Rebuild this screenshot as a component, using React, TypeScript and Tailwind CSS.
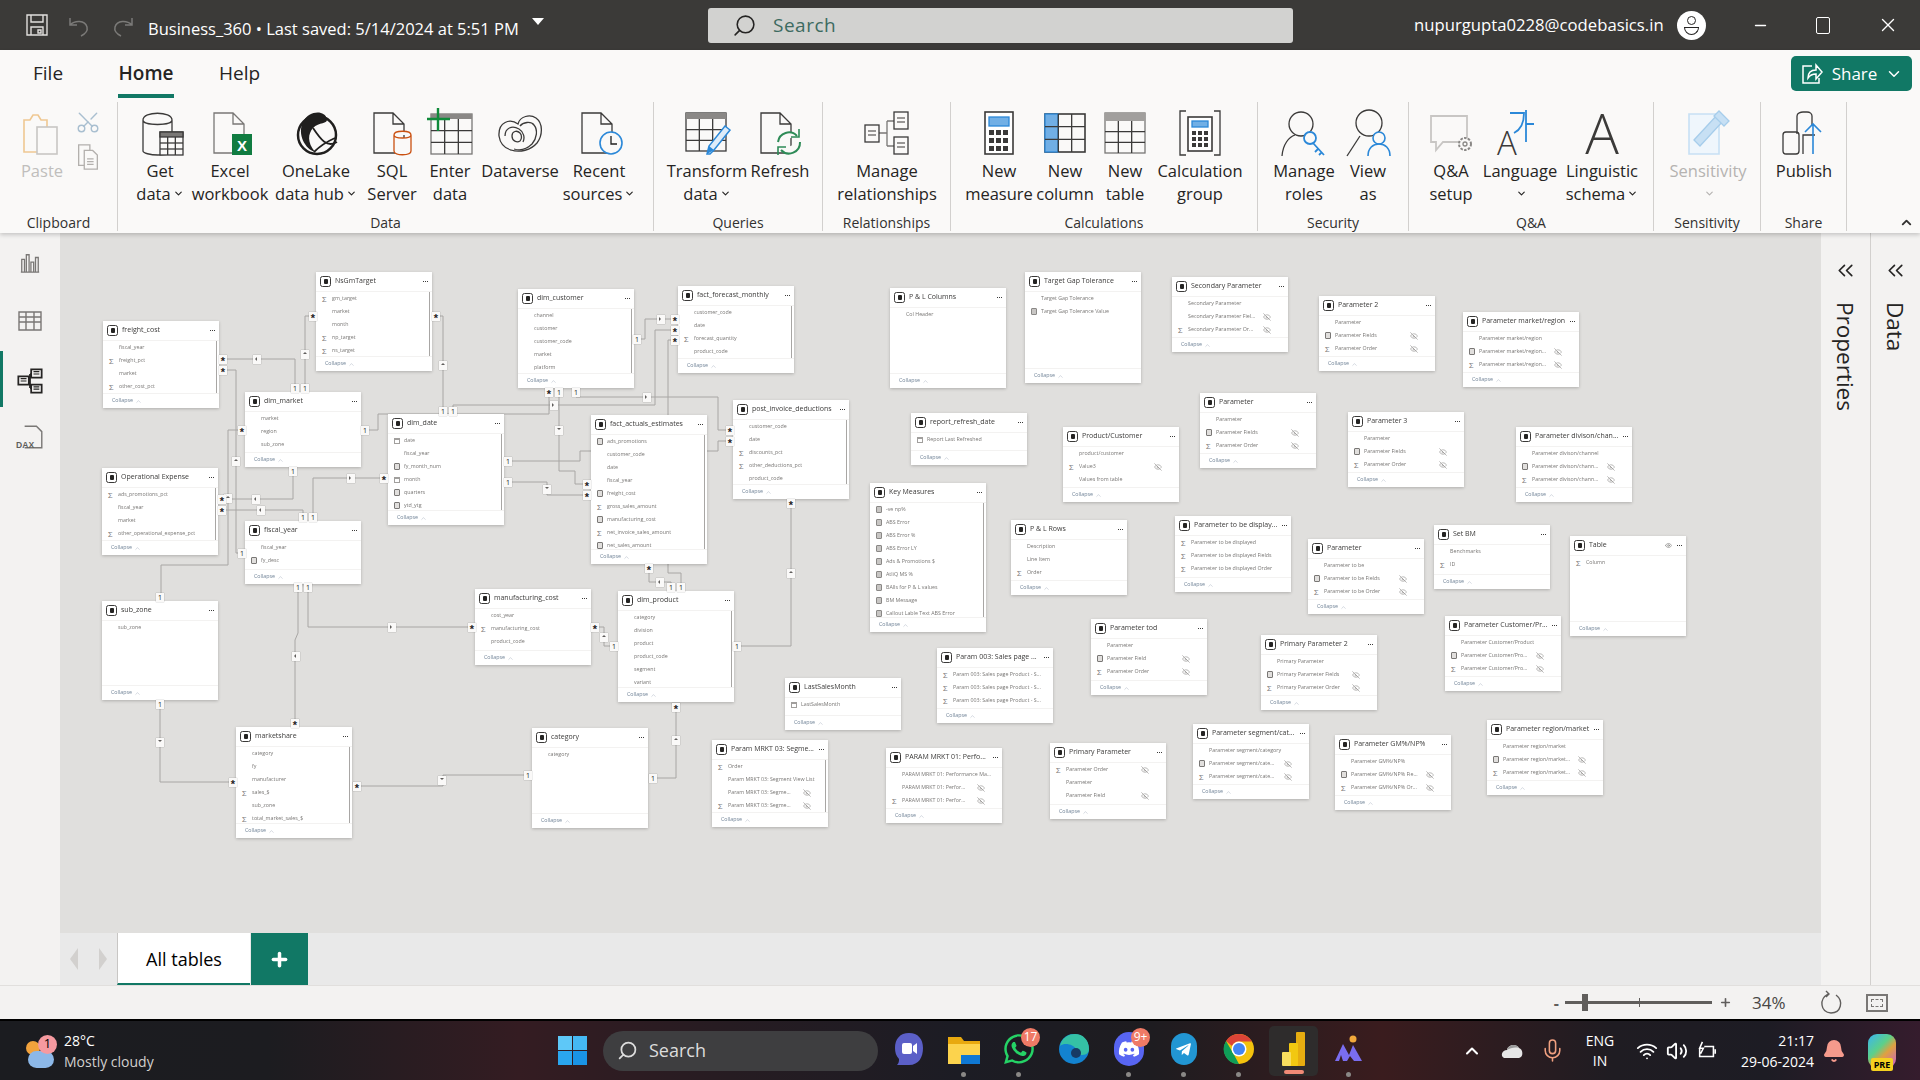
import { ChevronDown, ChevronUp, ChevronsLeft, Scissors, EyeOff, Eye, Plus, Minus, X, Wifi, Volume2, Mic, Bell, Search } from 'lucide-react'
import { FaWhatsapp, FaDiscord, FaTelegramPlane } from 'react-icons/fa'
import type { ReactNode } from 'react'

const dark = '#3b3a39'
const blue = '#2b88d8'

function Ico({ children, className = 'h-12 w-12 overflow-visible' }: { children: ReactNode; className?: string }) {
  return <svg viewBox="0 0 48 48" className={className} fill="none" stroke={dark} strokeWidth="1.3">{children}</svg>
}

const doc = (x: number) => `M${x} 5h19l11 11v29h-30zM${x + 19} 5v11h11`

const gridLines = (x: number, y: number, w: number, h: number, cols: number, rows: number) => {
  const out = []
  for (let i = 1; i < cols; i++) out.push(<path key={'c' + i} d={`M${x + (w / cols) * i} ${y}v${h}`} />)
  for (let i = 1; i < rows; i++) out.push(<path key={'r' + i} d={`M${x} ${y + (h / rows) * i}h${w}`} />)
  return out
}

const icons: Record<string, ReactNode> = {
  paste: (
    <Ico>
      <path d="M6 12h6l3-5h5l3 5h6v32H6z" stroke="#efc892" strokeWidth="1.6" />
      <rect x="19" y="19" width="20" height="27" fill="#faf9f8" stroke="#c8c6c4" strokeWidth="1.6" />
    </Ico>
  ),
  getdata: (
    <Ico>
      <path d="M7 12c0-9 29-9 29 0v31c0 3-8 4-14 4-8 0-15-2-15-4zM7 12c0 6 29 6 29 0" />
      <rect x="24" y="24" width="23" height="23" fill="#faf9f8" stroke="#3b3a39" />
      <rect x="24" y="24" width="23" height="5" fill="#797775" />
      {gridLines(24, 29, 23, 18, 3, 3)}
    </Ico>
  ),
  excel: (
    <Ico>
      <path d={doc(8)} stroke="#797775" />
      <rect x="26" y="26" width="20" height="21" fill="#107c41" stroke="none" />
      <text x="36" y="43" textAnchor="middle" fill="#fff" stroke="none" fontSize="15" fontWeight="700" fontFamily="Liberation Sans">X</text>
    </Ico>
  ),
  onelake: (
    <Ico>
      <circle cx="25" cy="27" r="19" stroke="#201f1e" strokeWidth="2.5" />
      <path d="M11 14c6-12 22-12 24-3 1 5-8 3-14 9-5 6-6 14 2 24-10-3-18-18-12-30z" fill="#201f1e" stroke="none" />
      <path d="M21 20c8 12 14 20 24 14M22 44c6-6 12-10 21-14" stroke="#201f1e" strokeWidth="1.8" />
    </Ico>
  ),
  sql: (
    <Ico>
      <path d={doc(6)} />
      <path d="M26 27c0-5 17-5 17 0v16c0 5-17 5-17 0zM26 27c0 4 17 4 17 0" fill="#faf9f8" stroke="#ca5010" />
    </Ico>
  ),
  enter: (
    <Ico>
      <rect x="5" y="6" width="41" height="40" stroke="#797775" />
      <rect x="5" y="6" width="41" height="5" fill="#8a8886" stroke="none" />
      {gridLines(5, 11, 41, 35, 3, 3)}
      <path d="M12 0v23M1 11h23" stroke="#0f8a3a" strokeWidth="2.4" />
    </Ico>
  ),
  dataverse: (
    <Ico>
      <path d="M3 28C2 14 14 10 22 16c2-8 12-10 18-6 7 5 7 17 1 25-6 7-17 10-26 7C8 40 4 35 3 28z" />
      <path d="M9 28c0-8 7-11 14-7 5 3 6 9 4 13" />
      <path d="M24 18c3-4 11-5 14-1 4 5 3 13-2 19-5 5-12 7-18 5" />
      <path d="M16 28c0-5 5-6 8-3 2 2 2 6 0 8-3 2-8 0-8-5z" />
    </Ico>
  ),
  recent: (
    <Ico>
      <path d={doc(7)} />
      <circle cx="36" cy="35" r="11" fill="#faf9f8" stroke={blue} strokeWidth="1.6" />
      <path d="M36 28v8h6" stroke="#201f1e" />
    </Ico>
  ),
  transform: (
    <Ico>
      <rect x="3" y="5" width="40" height="38" />
      <rect x="3" y="5" width="40" height="6" fill="#8a8886" stroke="none" />
      {gridLines(3, 11, 40, 32, 3, 3)}
      <path d="M27 46l-3 0 2-8 16-20 5 4-16 20z" fill="#deecf9" stroke={blue} strokeWidth="1.5" />
      <path d="M24 46l2-8 5 4z" fill={blue} stroke="none" />
    </Ico>
  ),
  refresh: (
    <Ico>
      <path d={doc(5)} />
      <path d="M22 34a11 11 0 0 1 19-6M44 34a11 11 0 0 1-19 8" fill="#faf9f8" stroke="#2e8b57" strokeWidth="2" />
      <path d="M43 21v8h-8M22 47v-8h8" stroke="#2e8b57" strokeWidth="1.6" />
    </Ico>
  ),
  relationships: (
    <Ico>
      <path d="M14 25h10M24 13v25M24 13h8M24 38h8" stroke="#797775" />
      <rect x="31" y="4" width="14" height="17" fill="#faf9f8" />
      <rect x="31" y="29" width="14" height="17" fill="#faf9f8" />
      <rect x="2" y="17" width="14" height="17" fill="#faf9f8" />
      <path d="M34 10h8M34 14h8M34 35h8M34 39h8M5 23h8M5 27h8" stroke="#797775" />
    </Ico>
  ),
  measure: (
    <Ico>
      <rect x="10" y="4" width="28" height="42" fill="#fff" strokeWidth="1.6" />
      <rect x="14" y="9" width="20" height="9" fill="#71afe5" stroke={blue} />
      {[22, 30, 38].map(y => [14, 21, 28].map(x => <rect key={x + '-' + y} x={x} y={y} width="5" height="5" fill="#3b3a39" stroke="none" />))}
    </Ico>
  ),
  column: (
    <Ico>
      <rect x="4" y="6" width="40" height="38" strokeWidth="1.6" />
      <rect x="4" y="6" width="13" height="38" fill="#71afe5" stroke={blue} />
      {gridLines(4, 6, 40, 38, 3, 3)}
    </Ico>
  ),
  table: (
    <Ico>
      <rect x="4" y="5" width="40" height="40" stroke="#797775" />
      <rect x="4" y="5" width="40" height="8" fill="#a19f9d" stroke="none" />
      {gridLines(4, 13, 40, 32, 3, 3)}
    </Ico>
  ),
  calcgroup: (
    <Ico>
      <path d="M10 3H4v44h6M38 3h6v44h-6" />
      <rect x="12" y="9" width="24" height="34" fill="#fff" strokeWidth="1.6" />
      <rect x="16" y="13" width="16" height="6" fill="#71afe5" stroke={blue} />
      {[23, 29, 35].map(y => [16, 22, 28].map(x => <rect key={x + '-' + y} x={x} y={y} width="4" height="4" fill="#3b3a39" stroke="none" />))}
    </Ico>
  ),
  roles: (
    <Ico>
      <circle cx="21" cy="16" r="12" />
      <path d="M2 48c1-12 7-19 13-21" />
      <circle cx="30" cy="30" r="6" fill="#faf9f8" stroke={blue} strokeWidth="1.8" />
      <path d="M33 35l11 12M38 41l-3 3M42 44l-3 3" stroke={blue} strokeWidth="1.8" />
    </Ico>
  ),
  viewas: (
    <Ico>
      <circle cx="25" cy="15" r="13" />
      <path d="M3 48l13-20" />
      <circle cx="35" cy="30" r="6" fill="#faf9f8" stroke={blue} strokeWidth="1.6" />
      <path d="M24 48c0-8 5-12 11-12s11 4 11 12" stroke={blue} strokeWidth="1.6" />
    </Ico>
  ),
  qa: (
    <Ico>
      <path d="M4 8h36v26H16l-7 8v-8H4z" stroke="#c8c6c4" strokeWidth="1.8" />
      <circle cx="38" cy="36" r="6" fill="#faf9f8" stroke="#8a8886" strokeWidth="2" strokeDasharray="2.5 1.3" />
      <circle cx="38" cy="36" r="2" stroke="#8a8886" />
    </Ico>
  ),
  language: (
    <Ico>
      <text x="11" y="47" textAnchor="middle" fontSize="33" fontWeight="300" fill="#3b3a39" stroke="none" fontFamily="Open Sans">A</text>
      <path d="M14 5h14c0 10-4 17-10 20M30 2v32M30 16h8" stroke={blue} strokeWidth="1.8" />
    </Ico>
  ),
  linguistic: (
    <Ico>
      <text x="24" y="46" textAnchor="middle" fontSize="56" fontWeight="300" fill="#3b3a39" stroke="none" fontFamily="Open Sans">A</text>
    </Ico>
  ),
  sensitivity: (
    <Ico>
      <path d="M5 6h30v40H5z" fill="#eff6fc" stroke="#c7e0f4" strokeWidth="1.6" />
      <path d="M10 32L34 6l6 6-24 26z" fill="#c7e0f4" stroke="#a6cdeb" />
      <path d="M30 8l5-5 10 10-5 5z" fill="#c7e0f4" stroke="#a6cdeb" />
    </Ico>
  ),
  publish: (
    <Ico>
      <path d="M17 26V8c0-3 4-4 6-4h4c3 0 5 2 5 4v10" />
      <rect x="3" y="24" width="16" height="22" rx="3" />
      <path d="M23 46V27h12" />
      <path d="M33 46V16M25 24l8-8 8 8" stroke={blue} strokeWidth="1.6" />
    </Ico>
  ),
}

type Btn = { w: number; icon?: string; lines: string[]; chev?: boolean; faded?: boolean }
type Group = { label: string; w: number; pl: number; buttons: Btn[] }

const groups: Group[] = [
  { label: 'Data', w: 536, pl: 7, buttons: [
    { w: 70, icon: 'getdata', lines: ['Get', 'data'], chev: true },
    { w: 70, icon: 'excel', lines: ['Excel', 'workbook'] },
    { w: 102, icon: 'onelake', lines: ['OneLake', 'data hub'], chev: true },
    { w: 50, icon: 'sql', lines: ['SQL', 'Server'] },
    { w: 66, icon: 'enter', lines: ['Enter', 'data'] },
    { w: 74, icon: 'dataverse', lines: ['Dataverse'] },
    { w: 84, icon: 'recent', lines: ['Recent', 'sources'], chev: true },
  ] },
  { label: 'Queries', w: 169, pl: 6, buttons: [
    { w: 94, icon: 'transform', lines: ['Transform', 'data'], chev: true },
    { w: 52, icon: 'refresh', lines: ['Refresh'] },
  ] },
  { label: 'Relationships', w: 128, pl: 9, buttons: [{ w: 110, icon: 'relationships', lines: ['Manage', 'relationships'] }] },
  { label: 'Calculations', w: 307, pl: 9, buttons: [
    { w: 78, icon: 'measure', lines: ['New', 'measure'] },
    { w: 54, icon: 'column', lines: ['New', 'column'] },
    { w: 66, icon: 'table', lines: ['New', 'table'] },
    { w: 84, icon: 'calcgroup', lines: ['Calculation', 'group'] },
  ] },
  { label: 'Security', w: 151, pl: 14, buttons: [
    { w: 64, icon: 'roles', lines: ['Manage', 'roles'] },
    { w: 64, icon: 'viewas', lines: ['View', 'as'] },
  ] },
  { label: 'Q&A', w: 245, pl: 12, buttons: [
    { w: 60, icon: 'qa', lines: ['Q&A', 'setup'] },
    { w: 78, icon: 'language', lines: ['Language', ''], chev: true },
    { w: 86, icon: 'linguistic', lines: ['Linguistic', 'schema'], chev: true },
  ] },
  { label: 'Sensitivity', w: 107, pl: 8, buttons: [{ w: 92, icon: 'sensitivity', lines: ['Sensitivity', ''], chev: true, faded: true }] },
  { label: 'Share', w: 86, pl: 11, buttons: [{ w: 64, icon: 'publish', lines: ['Publish'] }] },
]

function RibbonButton({ b }: { b: Btn }) {
  return (
    <div className={`flex flex-col items-center ${b.faded ? 'text-[#b5b3b1]' : 'text-[#252423]'}`} style={{ width: b.w }}>
      <div className="mt-[6px] flex h-[48px] items-center justify-center">{b.icon && icons[b.icon]}</div>
      <div className="mt-[3px] text-center text-[16.5px] leading-[23px] whitespace-nowrap">
        {b.lines.map((l, i) => (
          <div key={i} className="flex h-[23px] items-center justify-center">
            {l}
            {b.chev && i === b.lines.length - 1 && <ChevronDown size={11} strokeWidth={2.5} className="ml-[2px]" />}
          </div>
        ))}
      </div>
    </div>
  )
}

function Ribbon() {
  return (
    <div className="relative z-10 flex h-[183px] flex-col bg-[#faf9f8] shadow-[0_2px_4px_rgba(0,0,0,0.18)]">
      <div className="relative flex h-[52px] items-start text-[19px] text-[#252423]">
        <div className="ml-[33px] mt-[9px] w-[85px]">File</div>
        <div className="relative mt-[9px] w-[56px] text-center font-semibold">
          Home
          <div className="absolute -bottom-[10px] left-0 h-[4px] w-[56px] bg-[#117865]" />
        </div>
        <div className="ml-[45px] mt-[9px]">Help</div>
        <div className="ml-auto mr-[8px] mt-[6px] flex h-[35px] w-[121px] items-center justify-center gap-[8px] rounded-[5px] bg-[#117865] text-[17px] text-white">
          <svg viewBox="0 0 24 24" className="h-[24px] w-[24px]" fill="none" stroke="#fff" strokeWidth="1.5">
            <path d="M12 4H3v17h16v-5M8 16c0-5 3-8 8-8V3l6 7-6 7v-5c-4 0-6 1-8 4z" />
          </svg>
          Share
          <ChevronDown size={18} />
        </div>
      </div>
      <div className="flex items-start">
        <div className="flex h-[129px] w-[118px] flex-col border-r border-[#d2d0ce]">
          <div className="flex h-[113px]">
            <div className="ml-[14px] flex w-[56px] flex-col items-center">
              <div className="mt-[6px] flex h-[48px] items-center justify-center">{icons.paste}</div>
              <div className="mt-[3px] text-[16.5px] leading-[23px] text-[#c0bebc]">Paste</div>
            </div>
            <div className="ml-[5px] flex flex-col items-center">
              <Scissors size={26} className="mt-[7px] -rotate-90 text-[#a9bfd0]" strokeWidth={1.3} />
              <svg viewBox="0 0 24 30" className="mt-[8px] h-[28px] w-[24px]" fill="none" stroke="#b3b0ad" strokeWidth="1.4">
                <path d="M2 2h12v22H2z" />
                <path d="M8 8h9l5 5v15H8z" fill="#faf9f8" />
                <path d="M11 17h7M11 20h7M11 23h7" />
              </svg>
            </div>
          </div>
          <div className="h-[16px] text-center text-[14px] leading-[16px] text-[#323130]">Clipboard</div>
        </div>
        {groups.map(g => (
          <div key={g.label} className="flex h-[129px] flex-col border-r border-[#d2d0ce]" style={{ width: g.w }}>
            <div className="flex h-[113px]" style={{ paddingLeft: g.pl }}>
              {g.buttons.map((b, i) => <RibbonButton key={i} b={b} />)}
            </div>
            <div className="h-[16px] text-center text-[14px] leading-[16px] text-[#323130]">{g.label}</div>
          </div>
        ))}
        <ChevronUp size={15} strokeWidth={3} className="ml-auto mr-[6px] mt-[113px] text-[#323130]" />
      </div>
    </div>
  )
}

function TitleBar() {
  return (
    <div className="flex h-[50px] items-center bg-[#3b3a38] text-white">
      <svg viewBox="0 0 24 24" className="ml-[25px] h-[24px] w-[24px]" fill="none" stroke="#e1dfdd" strokeWidth="1.4">
        <path d="M2 2h20v20H2zM6 2v7h12V2M6 22v-8h12v8M13 17h3v3h-3z" />
      </svg>
      <svg viewBox="0 0 24 24" className="ml-[18px] h-[24px] w-[24px]" fill="none" stroke="#7b7a78" strokeWidth="1.5">
        <path d="M3 5v7h7M3 12c5-5 15-5 17 2 1 4-2 7-6 9" />
      </svg>
      <svg viewBox="0 0 24 24" className="ml-[20px] h-[24px] w-[24px]" fill="none" stroke="#7b7a78" strokeWidth="1.5">
        <path d="M21 5v7h-7M21 12c-5-5-15-5-17 2-1 4 2 7 6 9" />
      </svg>
      <div className="ml-[13px] mt-[8px] w-[375px] text-[16.5px] whitespace-nowrap">Business_360 • Last saved: 5/14/2024 at 5:51 PM</div>
      <div className="ml-[9px] mb-[8px] h-0 w-0 border-x-[6px] border-t-[7px] border-x-transparent border-t-white" />
      <div className="ml-[164px] flex h-[35px] w-[585px] items-center rounded-[3px] bg-[#d2d2d0] text-[19px] text-[#3d6a60]">
        <Search size={25} strokeWidth={1.5} className="ml-[24px] -scale-x-100 text-[#252423]" />
        <span className="ml-[16px] tracking-[0.5px]">Search</span>
      </div>
      <div className="ml-[121px] w-[249px] text-[16.7px] whitespace-nowrap">nupurgupta0228@codebasics.in</div>
      <div className="ml-[14px] flex h-[29px] w-[29px] flex-col items-center justify-center rounded-full bg-white">
        <div className="h-[9px] w-[9px] rounded-full border-[1.5px] border-[#252423]" />
        <div className="mt-[2px] h-[8px] w-[15px] rounded-b-full border-[1.5px] border-[#252423]" />
      </div>
      <Minus size={17} className="ml-[46px]" />
      <div className="ml-[47px] h-[17px] w-[14px] rounded-[2px] border-[1.5px] border-white" />
      <X size={22} className="ml-[47px]" strokeWidth={1.5} />
    </div>
  )
}

type Node = { t: string; x: number; y: number; h: number; rows: string[]; scroll?: boolean; eye?: boolean }

// first char of a row: space none, S sum, C calc column, D date, M measure. trailing ! = hidden
const nodes: Node[] = [
  { t: 'freight_cost', x: 103, y: 321, h: 87, scroll: true, rows: [' fiscal_year', 'Sfreight_pct', ' market', 'Sother_cost_pct'] },
  { t: 'NsGmTarget', x: 316, y: 272, h: 99, scroll: true, rows: ['Sgm_target', ' market', ' month', 'Snp_target', 'Sns_target'] },
  { t: 'dim_market', x: 245, y: 392, h: 75, rows: [' market', ' region', ' sub_zone'] },
  { t: 'dim_date', x: 388, y: 414, h: 111, scroll: true, rows: ['Ddate', ' fiscal_year', 'Cfy_month_num', 'Dmonth', 'Cquarters', 'Cytd_ytg'] },
  { t: 'Operational Expense', x: 102, y: 468, h: 87, scroll: true, rows: ['Sads_promotions_pct', ' fiscal_year', ' market', 'Sother_operational_expense_pct'] },
  { t: 'fiscal_year', x: 245, y: 521, h: 63, rows: [' fiscal_year', 'Cfy_desc'] },
  { t: 'dim_customer', x: 518, y: 289, h: 99, scroll: true, rows: [' channel', ' customer', ' customer_code', ' market', ' platform'] },
  { t: 'fact_forecast_monthly', x: 678, y: 286, h: 87, scroll: true, rows: [' customer_code', ' date', 'Sforecast_quantity', ' product_code'] },
  { t: 'fact_actuals_estimates', x: 591, y: 415, h: 149, scroll: true, rows: ['Cads_promotions', ' customer_code', ' date', ' fiscal_year', 'Cfreight_cost', 'Sgross_sales_amount', 'Cmanufacturing_cost', 'Snet_invoice_sales_amount', 'Cnet_sales_amount'] },
  { t: 'post_invoice_deductions', x: 733, y: 400, h: 99, scroll: true, rows: [' customer_code', ' date', 'Sdiscounts_pct', 'Sother_deductions_pct', ' product_code'] },
  { t: 'manufacturing_cost', x: 475, y: 589, h: 76, rows: [' cost_year', 'Smanufacturing_cost', ' product_code'] },
  { t: 'dim_product', x: 618, y: 591, h: 111, scroll: true, rows: [' category', ' division', ' product', ' product_code', ' segment', ' variant'] },
  { t: 'sub_zone', x: 102, y: 601, h: 99, rows: [' sub_zone'] },
  { t: 'marketshare', x: 236, y: 727, h: 111, scroll: true, rows: [' category', ' fy', ' manufacturer', 'Ssales_$', ' sub_zone', 'Stotal_market_sales_$'] },
  { t: 'category', x: 532, y: 728, h: 100, rows: [' category'] },
  { t: 'P & L Columns', x: 890, y: 288, h: 100, rows: [' Col Header'] },
  { t: 'Target Gap Tolerance', x: 1025, y: 272, h: 111, rows: [' Target Gap Tolerance', 'MTarget Gap Tolerance Value'] },
  { t: 'Secondary Parameter', x: 1172, y: 277, h: 75, rows: [' Secondary Parameter', ' Secondary Parameter Fiel...!', 'SSecondary Parameter Or...!'] },
  { t: 'Parameter', x: 1200, y: 393, h: 75, rows: [' Parameter', 'CParameter Fields!', 'SParameter Order!'] },
  { t: 'report_refresh_date', x: 911, y: 413, h: 52, rows: ['DReport Last Refreshed'] },
  { t: 'Product/Customer', x: 1063, y: 427, h: 75, rows: [' product/customer', 'SValue3!', ' Values from table'] },
  { t: 'Key Measures', x: 870, y: 483, h: 149, scroll: true, rows: ['M-ve np%', 'MABS Error', 'MABS Error %', 'MABS Error LY', 'MAds & Promotions $', 'MAtliQ MS %', 'MBAlls for P & L values', 'MBM Message', 'MCallout Lable Text ABS Error'] },
  { t: 'P & L Rows', x: 1011, y: 520, h: 75, rows: [' Description', ' Line Item', 'SOrder'] },
  { t: 'Parameter to be display...', x: 1175, y: 516, h: 76, rows: ['SParameter to be displayed', 'SParameter to be displayed Fields', 'SParameter to be displayed Order'] },
  { t: 'Parameter tod', x: 1091, y: 619, h: 76, rows: [' Parameter', 'CParameter Field!', 'SParameter Order!'] },
  { t: 'Parameter 2', x: 1319, y: 296, h: 75, rows: [' Parameter', 'CParameter Fields!', 'SParameter Order!'] },
  { t: 'Parameter market/region', x: 1463, y: 312, h: 75, rows: [' Parameter market/region', 'CParameter market/region...!', 'SParameter market/region...!'] },
  { t: 'Parameter 3', x: 1348, y: 412, h: 75, rows: [' Parameter', 'CParameter Fields!', 'SParameter Order!'] },
  { t: 'Parameter divison/chan...', x: 1516, y: 427, h: 75, rows: [' Parameter divison/channel', 'CParameter divison/chann...!', 'SParameter divison/chann...!'] },
  { t: 'Parameter', x: 1308, y: 539, h: 75, rows: [' Parameter to be', 'CParameter to be Fields!', 'SParameter to be Order!'] },
  { t: 'Set BM', x: 1434, y: 525, h: 64, rows: [' Benchmarks', 'SID'] },
  { t: 'Table', x: 1570, y: 536, h: 100, eye: true, rows: ['SColumn'] },
  { t: 'Parameter Customer/Pr...', x: 1445, y: 616, h: 75, rows: [' Parameter Customer/Product', 'CParameter Customer/Pro...!', 'SParameter Customer/Pro...!'] },
  { t: 'Param 003: Sales page ...', x: 937, y: 648, h: 75, rows: ['SParam 003: Sales page Product - S...', 'SParam 003: Sales page Product - S...', 'SParam 003: Sales page Product - S...'] },
  { t: 'LastSalesMonth', x: 785, y: 678, h: 52, rows: ['DLastSalesMonth'] },
  { t: 'Param MRKT 03: Segme...', x: 712, y: 740, h: 87, scroll: true, rows: ['SOrder', ' Param MRKT 03: Segment View List', ' Param MRKT 03: Segme...!', 'SParam MRKT 03: Segme...!'] },
  { t: 'PARAM MRKT 01: Perfo...', x: 886, y: 748, h: 75, rows: [' PARAM MRKT 01: Performance Ma...', ' PARAM MRKT 01: Perfor...!', 'SPARAM MRKT 01: Perfor...!'] },
  { t: 'Primary Parameter', x: 1050, y: 743, h: 76, rows: ['SParameter Order!', ' Parameter', ' Parameter Field!'] },
  { t: 'Primary Parameter 2', x: 1261, y: 635, h: 75, rows: [' Primary Parameter', 'CPrimary Parameter Fields!', 'SPrimary Parameter Order!'] },
  { t: 'Parameter segment/cat...', x: 1193, y: 724, h: 75, rows: [' Parameter segment/category', 'CParameter segment/cate...!', 'SParameter segment/cate...!'] },
  { t: 'Parameter GM%/NP%', x: 1335, y: 735, h: 75, rows: [' Parameter GM%/NP%', 'CParameter GM%/NP% Fie...!', 'SParameter GM%/NP% Or...!'] },
  { t: 'Parameter region/market', x: 1487, y: 720, h: 75, rows: [' Parameter region/market', 'CParameter region/market...!', 'SParameter region/market...!'] },
]

const lines: number[][][] = [
  [[223, 359], [295, 359], [295, 388]],
  [[223, 370], [236, 370], [236, 553], [242, 553]],
  [[313, 316], [305, 316], [305, 388]],
  [[436, 316], [443, 316], [443, 411]],
  [[242, 430], [228, 430], [228, 565], [161, 565], [161, 597]],
  [[293, 471], [293, 499], [222, 499]],
  [[222, 510], [303, 510], [303, 517]],
  [[313, 517], [313, 478], [384, 478]],
  [[365, 430], [378, 430], [378, 414], [549, 414], [549, 392]],
  [[453, 411], [453, 405], [655, 405], [655, 330], [675, 330]],
  [[559, 392], [559, 471], [575, 471], [575, 484], [587, 484]],
  [[576, 392], [576, 397], [718, 397], [718, 430], [730, 430]],
  [[637, 339], [645, 339], [645, 319], [675, 319]],
  [[675, 340], [668, 340], [668, 573], [681, 573], [681, 587]],
  [[508, 461], [580, 461], [580, 451], [718, 451], [718, 441], [730, 441]],
  [[508, 482], [547, 482], [547, 495], [587, 495]],
  [[649, 568], [649, 582], [671, 582], [671, 587]],
  [[791, 503], [791, 646], [737, 646]],
  [[298, 587], [298, 633], [295, 640], [295, 723]],
  [[308, 587], [308, 627], [472, 627]],
  [[160, 704], [160, 782], [233, 782]],
  [[357, 786], [443, 786], [443, 775], [528, 775]],
  [[653, 778], [676, 778], [676, 707]],
  [[595, 627], [604, 627], [604, 646], [614, 646]],
]

const marks: [string, number, number][] = [
  ['*', 223, 359], ['l', 257, 359], ['1', 295, 388], ['*', 223, 370], ['u', 236, 461], ['1', 242, 553],
  ['*', 313, 316], ['u', 305, 354], ['1', 305, 388], ['*', 436, 316], ['u', 443, 365], ['1', 443, 411],
  ['*', 242, 430], ['u', 228, 498], ['1', 160, 597], ['1', 293, 471], ['l', 256, 499], ['*', 222, 499],
  ['*', 222, 510], ['l', 261, 510], ['1', 303, 517], ['1', 313, 517], ['r', 351, 478], ['*', 384, 478],
  ['1', 365, 430], ['*', 549, 392], ['1', 453, 411], ['r', 554, 405], ['*', 675, 330],
  ['1', 559, 392], ['d', 559, 430], ['*', 587, 484], ['1', 576, 392], ['r', 647, 397], ['*', 730, 430],
  ['1', 637, 339], ['r', 661, 319], ['*', 675, 319], ['*', 675, 340], ['1', 681, 587], ['1', 508, 461], ['*', 730, 441],
  ['1', 508, 482], ['d', 547, 489], ['*', 587, 495], ['*', 649, 568], ['l', 660, 582], ['1', 671, 587],
  ['*', 791, 503], ['u', 791, 573], ['1', 737, 646], ['1', 298, 587], ['l', 296, 656], ['*', 295, 723],
  ['1', 308, 587], ['r', 392, 627], ['*', 472, 627], ['1', 160, 704], ['d', 160, 742], ['*', 233, 782],
  ['*', 357, 786], ['d', 442, 780], ['1', 528, 775], ['1', 653, 778], ['u', 676, 740], ['*', 676, 707],
  ['*', 595, 627], ['u', 604, 637], ['1', 614, 646],
]

const arrowPath: Record<string, string> = { l: 'M2 0L0 2 2 4z', r: 'M0 0L2 2 0 4z', u: 'M0 2L2 0 4 2z', d: 'M0 0L2 2 4 0z' }

function TableGlyph() {
  return (
    <div className="flex h-[11px] w-[11px] shrink-0 items-center justify-center rounded-[2.5px] border border-[#3b3a39]">
      <div className="h-[5px] w-[4px] rounded-[1px] bg-[#252423]" />
    </div>
  )
}

function RowGlyph({ k }: { k: string }) {
  if (k === 'S') return <span className="text-[8px] leading-none text-[#797775]">Σ</span>
  if (k === ' ') return null
  if (k === 'D') {
    return <div className="h-[6px] w-[6px] border border-[#a19f9d] border-t-2" />
  }
  return <div className={`h-[7px] w-[6px] rounded-[1px] border ${k === 'M' ? 'border-[#8a8886] bg-[#c8c6c4]' : 'border-[#797775] bg-[#e1dfdd]'}`} />
}

function ModelNode({ n }: { n: Node }) {
  return (
    <div className="absolute flex w-[116px] flex-col bg-white shadow-[0_1px_3px_rgba(0,0,0,0.22)]" style={{ left: n.x - 60, top: n.y - 233, height: n.h }}>
      <div className="flex h-[20px] shrink-0 items-center border-b border-[#f3f2f1] pl-[4px] pr-[4px]">
        <TableGlyph />
        <span className="ml-[4px] flex-1 truncate text-[7px] text-[#3b3a39] blur-[0.25px]">{n.t}</span>
        {n.eye && <Eye size={7} className="mr-[5px] text-[#797775]" />}
        <div className="flex gap-[1px]">
          <div className="h-[1px] w-[1px] bg-[#3b3a39]" /><div className="h-[1px] w-[1px] bg-[#3b3a39]" /><div className="h-[1px] w-[1px] bg-[#3b3a39]" />
        </div>
      </div>
      <div className="relative flex-1 overflow-hidden">
        {n.rows.map((r, i) => {
          const hidden = r.endsWith('!')
          const name = r.slice(1).replace(/!$/, '')
          return (
            <div key={i} className="flex h-[13px] items-center pl-[6px] text-[5.3px] text-[#797775]">
              <div className="flex w-[10px] shrink-0 items-center"><RowGlyph k={r[0]} /></div>
              <span className="flex-1 truncate whitespace-nowrap blur-[0.25px]">{name}</span>
              {hidden && <EyeOff size={8} strokeWidth={1.5} className="mr-[17px] text-[#797775]" />}
            </div>
          )
        })}
        {n.scroll && <div className="absolute right-[2px] top-0 bottom-0 w-[1.5px] bg-[#a8a6a4]" />}
      </div>
      <div className="flex h-[15px] shrink-0 items-center gap-[2px] border-t border-[#f3f2f1] pl-[9px] text-[5.3px] text-[#6f8296]">
        <span className="blur-[0.25px]">Collapse</span>
        <ChevronUp size={7} strokeWidth={1} />
      </div>
    </div>
  )
}

function Canvas() {
  return (
    <div className="relative flex-1 overflow-hidden bg-[#e0dfdd] font-['Open_Sans',sans-serif]">
      <svg className="absolute inset-0 h-full w-full" viewBox="60 233 1761 700" fill="none" stroke="#a8a6a4" strokeWidth="1">
        {lines.map((l, i) => <polyline key={i} points={l.map(p => p.join(',')).join(' ')} />)}
      </svg>
      {nodes.map((n, i) => <ModelNode key={i} n={n} />)}
      {marks.map(([k, x, y], i) => {
        const isText = k === '1' || k === '*'
        return (
          <div
            key={i}
            className="absolute flex h-[9px] w-[8px] items-center justify-center bg-[#faf9f8] text-[7px] leading-none text-[#252423] shadow-[0_0_1px_rgba(0,0,0,0.4)]"
            style={{ left: x - 64, top: y - 237.5 }}
          >
            {isText ? (k === '*' ? <span className="mt-[4px] font-['Liberation_Sans'] text-[11px] font-bold">*</span> : k) : (
              <svg viewBox="0 0 4 4" className="h-[4px] w-[4px]"><path d={arrowPath[k]} fill="#605e5c" /></svg>
            )}
          </div>
        )
      })}
    </div>
  )
}

function LeftNav() {
  return (
    <div className="relative flex w-[60px] shrink-0 flex-col items-center bg-[#f3f2f1]">
      <div className="absolute left-0 top-[118px] h-[56px] w-[3px] bg-[#117865]" />
      <svg viewBox="0 0 24 24" className="mt-[19px] h-[22px] w-[22px]" fill="none" stroke="#797775" strokeWidth="1.4">
        <path d="M2 22h20M3 22V8h3v14M8 22V3h3v19M13 22V11h3v11M18 22V6h3v16" />
      </svg>
      <svg viewBox="0 0 24 24" className="mt-[35px] h-[24px] w-[24px]" fill="none" stroke="#797775" strokeWidth="1.4">
        <path d="M1 3h22v18H1zM1 8h22M1 13h22M8 3v18M16 3v18" />
      </svg>
      <svg viewBox="0 0 24 24" className="mt-[34px] h-[28px] w-[28px]" fill="none" stroke="#252423" strokeWidth="1.5">
        <path d="M13 2h9v7h-9zM13 15h9v7h-9zM2 8h9v7H2zM11 11.5h1M12 6v12M12 6h1M12 18h1" />
        <path d="M15 4h5M15 6h5M4 10h5M4 12h5M15 17h5M15 19h5" strokeWidth="1" />
      </svg>
      <svg viewBox="0 0 28 24" className="mt-[29px] h-[26px] w-[30px]" fill="none" stroke="#797775" strokeWidth="1.3">
        <path d="M9 2h11l5 5v15H9" />
        <text x="1" y="22" fontSize="8" fontWeight="700" fill="#605e5c" stroke="none" fontFamily="Liberation Sans">DAX</text>
      </svg>
    </div>
  )
}

function RightPanel({ label, w, border }: { label: string; w: number; border?: boolean }) {
  return (
    <div className={`flex shrink-0 flex-col items-center bg-[#f3f2f1] ${border ? 'border-l border-[#d2d0ce]' : ''}`} style={{ width: w }}>
      <ChevronsLeft size={25} strokeWidth={1.6} className="mt-[25px] text-[#252423]" />
      <div className="mt-[19px] text-[22.5px] text-[#252423] [writing-mode:vertical-rl]">{label}</div>
    </div>
  )
}

function TabStrip() {
  return (
    <div className="flex h-[52px] items-stretch bg-[#e9e9e9]">
      <div className="flex w-[57px] items-center justify-around">
        <div className="h-0 w-0 border-y-[11px] border-r-[8px] border-y-transparent border-r-[#d2d0ce]" />
        <div className="h-0 w-0 border-y-[11px] border-l-[8px] border-y-transparent border-l-[#d2d0ce]" />
      </div>
      <div className="flex w-[133px] items-center justify-center border-b-2 border-l border-b-[#117865] border-l-[#c8c6c4] bg-white pt-[2px] text-[18px] text-black">All tables</div>
      <div className="ml-[1px] flex w-[57px] items-center justify-center bg-[#117865]">
        <Plus size={21} strokeWidth={4} className="text-white" />
      </div>
    </div>
  )
}

function StatusBar() {
  return (
    <div className="flex h-[34px] items-center justify-end border-t border-[#e1dfdd] bg-[#f3f2f1] text-[#605e5c]">
      <span className="mr-[6px] text-[16px] font-bold leading-none">-</span>
      <div className="relative h-[3px] w-[147px] bg-[#605e5c]">
        <div className="absolute left-[17px] -top-[7px] h-[17px] w-[6px] bg-[#605e5c]" />
        <div className="absolute left-[74px] -top-[3px] h-[9px] w-px bg-[#605e5c]" />
      </div>
      <Plus size={13} strokeWidth={3} className="ml-[7px]" />
      <span className="ml-[20px] w-[48px] text-[17px] text-[#484644]">34%</span>
      <svg viewBox="0 0 24 24" className="ml-[19px] h-[26px] w-[24px]" fill="none" stroke="#605e5c" strokeWidth="1.4">
        <path d="M9 3c-9 5-8 18 3 19 10 0 13-12 5-18M7 0l3 3-3 3" />
      </svg>
      <div className="ml-[23px] mr-[32px] flex h-[18px] w-[22px] items-center justify-center border-2 border-[#797775]">
        <div className="h-[8px] w-[12px] border border-dashed border-[#797775]" />
      </div>
    </div>
  )
}

function AppSlot({ children, dot = true, active, badge }: { children: ReactNode; dot?: boolean; active?: boolean; badge?: string }) {
  return (
    <div className="relative flex h-[50px] w-[55px] shrink-0 items-center justify-center">
      {active && <div className="absolute inset-x-[3px] inset-y-0 rounded-[5px] bg-[#2e2c2c]" />}
      <div className="relative mb-[3px]">{children}</div>
      {badge && <div className="absolute right-[6px] top-[2px] flex h-[19px] min-w-[19px] items-center justify-center rounded-full bg-[#ef7a66] px-[2px] text-[12px] text-white">{badge}</div>}
      {dot && !active && <div className="absolute bottom-[-1px] h-[5px] w-[5px] rounded-full bg-[#8a8886]" />}
      {active && <div className="absolute bottom-[2px] h-[4px] w-[20px] rounded-full bg-[#f08a76]" />}
    </div>
  )
}

function Taskbar() {
  return (
    <div className="flex h-[61px] items-center border-t-2 border-black bg-[linear-gradient(90deg,#1b1c20_0%,#1c1c20_14%,#341c22_27%,#261c22_38%,#1c1c24_50%,#1e1c20_60%,#3a1c1e_72%,#1f1c22_84%,#1d1c24_92%,#351c2d_100%)] font-['Open_Sans',sans-serif] text-white">
      <div className="flex w-[558px] shrink-0 items-center">
        <div className="relative ml-[24px] h-[40px] w-[32px]">
          <div className="absolute left-[2px] top-[10px] h-[14px] w-[14px] rounded-full bg-[#f2a23c]" />
          <div className="absolute left-[4px] top-[20px] h-[17px] w-[26px] rounded-[9px] bg-[#8cb8e8]" />
          <div className="absolute left-[14px] top-[4px] flex h-[19px] w-[19px] items-center justify-center rounded-full bg-[#f59aa0] text-[13px] text-black">1</div>
        </div>
        <div className="ml-[8px] flex flex-col text-[14px] leading-[21px]">
          <span>28°C</span>
          <span className="text-[#d2d0ce]">Mostly cloudy</span>
        </div>
      </div>
      <div className="grid h-[29px] w-[29px] shrink-0 grid-cols-2 gap-[1px]">
        <div className="bg-[#5ec8f8]" /><div className="bg-[#45b9f4]" /><div className="bg-[#2aa6ef]" /><div className="bg-[#1a94e6]" />
      </div>
      <div className="ml-[16px] flex h-[40px] w-[275px] shrink-0 items-center rounded-full bg-[#3e3e40] text-[18px] text-[#dcdcdc]">
        <Search size={21} className="ml-[14px] -scale-x-100" />
        <span className="ml-[11px]">Search</span>
      </div>
      <div className="ml-[3px] flex">
        <AppSlot dot={false}>
          <svg viewBox="0 0 30 34" className="h-[34px] w-[30px]">
            <path d="M15 1c9 0 14 6 14 15s-4 17-14 17H3c2-2 2-4 2-6C2 24 1 20 1 16 1 7 6 1 15 1z" fill="#5b5fc7" />
            <rect x="8" y="11" width="10" height="11" rx="2" fill="#fff" />
            <path d="M19 14l4-3v11l-4-3z" fill="#fff" />
          </svg>
        </AppSlot>
        <AppSlot>
          <svg viewBox="0 0 34 34" className="h-[34px] w-[34px]">
            <path d="M1 5h13l3 4h16v22H1z" fill="#e8a90f" />
            <rect x="1" y="12" width="32" height="20" fill="#fcd34d" />
            <rect x="14" y="23" width="19" height="9" fill="#0f78d4" />
          </svg>
        </AppSlot>
        <AppSlot badge="17"><FaWhatsapp size={34} className="text-[#25d366]" /></AppSlot>
        <AppSlot dot={false}>
          <svg viewBox="0 0 32 34" className="h-[34px] w-[32px]">
            <circle cx="16" cy="17" r="15" fill="#1383d0" />
            <path d="M2 14C4 5 11 2 17 2c8 0 14 6 14 15 0 5-4 6-8 6-5 0-4-4-5-6-2-4-11-7-16-3z" fill="#35c1a5" />
            <circle cx="18" cy="21" r="5" fill="#173a66" />
          </svg>
        </AppSlot>
        <AppSlot badge="9+">
          <div className="flex h-[34px] w-[30px] items-center justify-center rounded-full bg-[#5865f2]"><FaDiscord size={22} className="text-white" /></div>
        </AppSlot>
        <AppSlot>
          <div className="flex h-[32px] w-[26px] items-center justify-center rounded-full bg-[#2296d3]"><FaTelegramPlane size={17} className="text-white" /></div>
        </AppSlot>
        <AppSlot>
          <svg viewBox="0 0 32 32" className="h-[32px] w-[32px]">
            <circle cx="16" cy="16" r="15" fill="#f4c20d" />
            <path d="M16 1a15 15 0 0 1 13 7.5H16a7.5 7.5 0 0 0-7 4.5L3 8A15 15 0 0 1 16 1z" fill="#db4437" />
            <path d="M3 8l7 12 6 11A15 15 0 0 1 3 8z" fill="#0f9d58" />
            <circle cx="16" cy="16" r="7.5" fill="#fff" />
            <circle cx="16" cy="16" r="6" fill="#4285f4" />
          </svg>
        </AppSlot>
        <AppSlot active>
          <svg viewBox="0 0 24 34" className="h-[34px] w-[24px]">
            <rect x="14" y="0" width="9" height="34" rx="1" fill="#e6ad10" />
            <rect x="7" y="11" width="9" height="23" rx="1" fill="#f2c811" />
            <rect x="0" y="20" width="9" height="14" rx="1" fill="#f8de5e" />
          </svg>
        </AppSlot>
        <AppSlot>
          <svg viewBox="0 0 30 30" className="h-[30px] w-[30px]">
            <circle cx="19" cy="5" r="3.5" fill="#f2a93b" />
            <path d="M1 27L9 10l6 11 4-10 9 16h-8l-4-5-3 5h-4L7 21l-2 6z" fill="#7a6df0" />
          </svg>
        </AppSlot>
      </div>
      <div className="ml-[76px] flex w-[40px] shrink-0 justify-center"><ChevronUp size={20} strokeWidth={2.5} /></div>
      <div className="flex w-[40px] shrink-0 justify-center">
        <svg viewBox="0 0 24 24" className="h-[24px] w-[24px]"><path d="M4 19c-4-2-2-8 3-8 1-5 9-7 12-2 4 1 5 9 0 10z" fill="#e6e6e6" /><path d="M7 11c1-5 9-7 12-2-4-1-9 0-12 2z" fill="#9a9a9a" /></svg>
      </div>
      <div className="flex w-[40px] shrink-0 justify-center"><Mic size={25} strokeWidth={1.5} className="text-[#f0a080]" /></div>
      <div className="flex w-[56px] shrink-0 flex-col items-center text-[14px] leading-[20px]"><span>ENG</span><span>IN</span></div>
      <div className="ml-[4px] flex w-[30px] shrink-0 justify-center"><Wifi size={22} /></div>
      <div className="flex w-[30px] shrink-0 justify-center"><Volume2 size={22} /></div>
      <div className="flex w-[30px] shrink-0 justify-center">
        <svg viewBox="0 0 24 24" className="h-[22px] w-[22px]" fill="none" stroke="#fff" strokeWidth="1.7"><path d="M9 7h10v11H4V9M21 10v5M7 2L4 9h4l-3 6" /></svg>
      </div>
      <div className="flex w-[92px] shrink-0 flex-col items-end text-[14px] leading-[21px]"><span>21:17</span><span>29-06-2024</span></div>
      <div className="flex w-[40px] shrink-0 justify-center"><Bell size={24} className="fill-[#f59a8c] text-[#f59a8c]" /></div>
      <div className="relative flex w-[56px] shrink-0 justify-center">
        <div className="h-[34px] w-[28px] rounded-[9px] bg-[linear-gradient(135deg,#3ab4f2_0%,#5cd08a_40%,#e0a040_60%,#c45ad6_100%)]" />
        <div className="absolute bottom-[-3px] rounded-[2px] bg-[#f5d020] px-[3px] text-[9px] font-bold leading-[13px] text-black">PRE</div>
      </div>
    </div>
  )
}

export default function App() {
  return (
    <div className="flex h-[1080px] w-[1920px] flex-col overflow-hidden font-['Open_Sans',sans-serif]">
      <TitleBar />
      <Ribbon />
      <div className="flex min-h-0 flex-1">
        <LeftNav />
        <div className="flex min-w-0 flex-1 flex-col">
          <Canvas />
          <TabStrip />
        </div>
        <RightPanel label="Properties" w={49} />
        <RightPanel label="Data" w={50} border />
      </div>
      <StatusBar />
      <Taskbar />
    </div>
  )
}
